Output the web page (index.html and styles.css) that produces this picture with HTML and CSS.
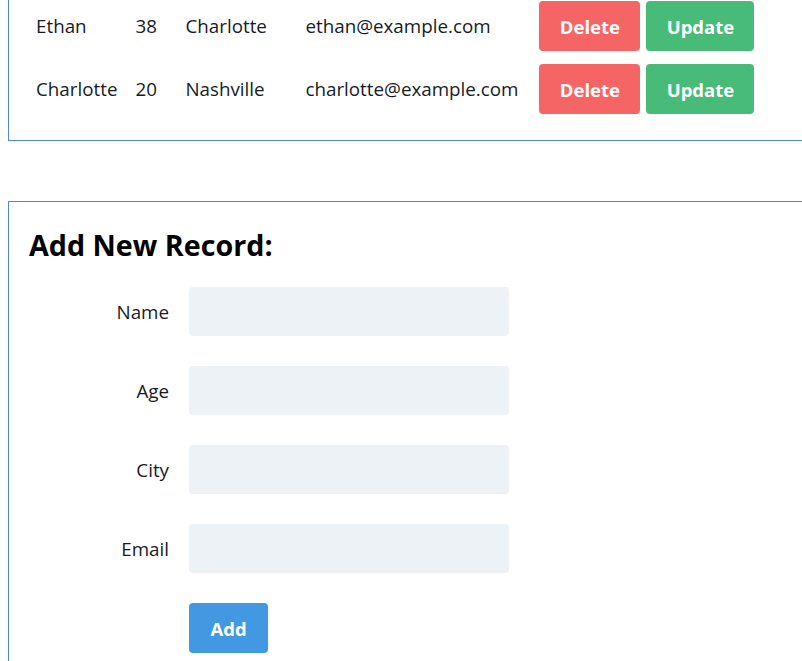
FILE: index.html
```html
<!DOCTYPE html>
<html>
<head>
<meta charset="utf-8">
<link rel="stylesheet" href="styles.css">
</head>
<body>
<div class="page">
  <section class="box table-box">
    <table class="records">
      <tbody>
        <tr>
          <td class="c-name">Ethan</td>
          <td class="c-age">38</td>
          <td class="c-city">Charlotte</td>
          <td class="c-email">ethan@example.com</td>
          <td class="c-actions"><div class="actions"><button class="btn btn-delete">Delete</button><button class="btn btn-update">Update</button></div></td>
        </tr>
        <tr>
          <td class="c-name">Charlotte</td>
          <td class="c-age">20</td>
          <td class="c-city">Nashville</td>
          <td class="c-email">charlotte@example.com</td>
          <td class="c-actions"><div class="actions"><button class="btn btn-delete">Delete</button><button class="btn btn-update">Update</button></div></td>
        </tr>
      </tbody>
    </table>
  </section>

  <section class="box form-box">
    <h2 class="form-title">Add New Record:</h2>
    <form class="record-form">
      <label class="f-label" for="name">Name</label>
      <input class="f-input" id="name" type="text">
      <label class="f-label" for="age">Age</label>
      <input class="f-input" id="age" type="text">
      <label class="f-label" for="city">City</label>
      <input class="f-input" id="city" type="text">
      <label class="f-label" for="email">Email</label>
      <input class="f-input" id="email" type="text">
      <span></span>
      <div><button type="button" class="btn btn-add">Add</button></div>
    </form>
  </section>
</div>
</body>
</html>
```

FILE: styles.css
```css
html, body {
  margin: 0;
  padding: 0;
  background: #ffffff;
  overflow: hidden;
}
body {
  font-family: "Open Sans", "Noto Sans", sans-serif;
  color: #161b26;
  font-size: 18.8px;
}
.page {
  padding-left: 8px;
  width: 900px;
}
.box {
  border: 1px solid #4f8cc3;
  box-sizing: border-box;
}
.table-box {
  border-top: none;
  border-right: none;
  margin-top: -6px;
  padding: 0 20px 20px 17px;
}
.records {
  border-collapse: collapse;
}
.records td {
  padding: 7px 9px 6px 10px;
  white-space: nowrap;
  vertical-align: middle;
}
.records td.c-name { padding-right: 8px; }
.c-name { width: 81px; }
.c-age { width: 31px; }
.c-city { width: 101px; }
.c-email { width: 215px; }
.actions {
  display: flex;
  gap: 6px;
}
.btn {
  font-family: inherit;
  font-weight: 700;
  font-size: 18.5px;
  color: #ffffff;
  border: none;
  border-radius: 4px;
  height: 50px;
  padding: 0;
  cursor: pointer;
}
.btn-delete { background: #f56565; width: 101px; }
.btn-update { background: #48bb78; width: 108px; }
.btn-add { background: #4299e1; width: 79px; }
.form-box {
  margin-top: 60px;
  border-right: none;
  border-bottom: none;
  padding: 24px 20px 20px;
  height: 480px;
}
.form-title {
  margin: 0 0 23px;
  font-size: 28.7px;
  font-weight: 700;
  color: #000000;
  line-height: 38px;
}
.record-form {
  display: grid;
  grid-template-columns: 140px 320px;
  column-gap: 20px;
  row-gap: 30px;
  align-items: center;
}
.f-label {
  text-align: right;
}
.f-input {
  height: 49px;
  box-sizing: border-box;
  border: none;
  border-radius: 4px;
  background: #edf2f7;
  width: 320px;
  font-family: inherit;
  font-size: 18px;
}
```
